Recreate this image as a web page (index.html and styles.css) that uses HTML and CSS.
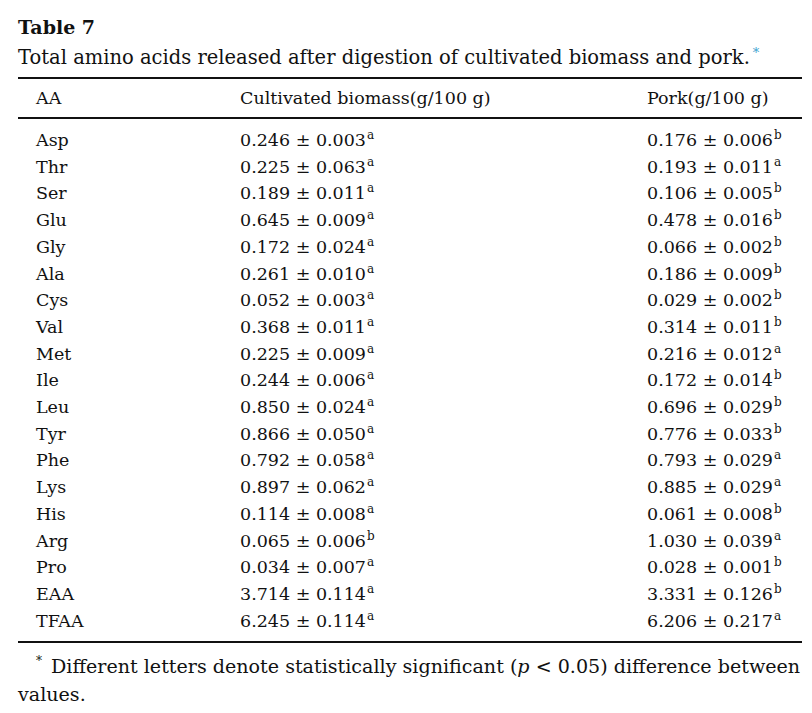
FILE: index.html
```html
<!DOCTYPE html>
<html>
<head>
<meta charset="utf-8">
<link rel="stylesheet" href="styles.css">
</head>
<body>
<div class="wrap">
  <h2 class="title">Table 7</h2>
  <p class="caption">Total amino acids released after digestion of cultivated biomass and pork.<sup class="ref">*</sup></p>
  <table class="tbl">
    <colgroup><col class="c1"><col class="c2"><col class="c3"></colgroup>
    <thead>
      <tr><th>AA</th><th>Cultivated biomass(g/100 g)</th><th>Pork(g/100 g)</th></tr>
    </thead>
    <tbody>
      <tr><td>Asp</td><td>0.246 ± 0.003<sup>a</sup></td><td>0.176 ± 0.006<sup>b</sup></td></tr>
      <tr><td>Thr</td><td>0.225 ± 0.063<sup>a</sup></td><td>0.193 ± 0.011<sup>a</sup></td></tr>
      <tr><td>Ser</td><td>0.189 ± 0.011<sup>a</sup></td><td>0.106 ± 0.005<sup>b</sup></td></tr>
      <tr><td>Glu</td><td>0.645 ± 0.009<sup>a</sup></td><td>0.478 ± 0.016<sup>b</sup></td></tr>
      <tr><td>Gly</td><td>0.172 ± 0.024<sup>a</sup></td><td>0.066 ± 0.002<sup>b</sup></td></tr>
      <tr><td>Ala</td><td>0.261 ± 0.010<sup>a</sup></td><td>0.186 ± 0.009<sup>b</sup></td></tr>
      <tr><td>Cys</td><td>0.052 ± 0.003<sup>a</sup></td><td>0.029 ± 0.002<sup>b</sup></td></tr>
      <tr><td>Val</td><td>0.368 ± 0.011<sup>a</sup></td><td>0.314 ± 0.011<sup>b</sup></td></tr>
      <tr><td>Met</td><td>0.225 ± 0.009<sup>a</sup></td><td>0.216 ± 0.012<sup>a</sup></td></tr>
      <tr><td>Ile</td><td>0.244 ± 0.006<sup>a</sup></td><td>0.172 ± 0.014<sup>b</sup></td></tr>
      <tr><td>Leu</td><td>0.850 ± 0.024<sup>a</sup></td><td>0.696 ± 0.029<sup>b</sup></td></tr>
      <tr><td>Tyr</td><td>0.866 ± 0.050<sup>a</sup></td><td>0.776 ± 0.033<sup>b</sup></td></tr>
      <tr><td>Phe</td><td>0.792 ± 0.058<sup>a</sup></td><td>0.793 ± 0.029<sup>a</sup></td></tr>
      <tr><td>Lys</td><td>0.897 ± 0.062<sup>a</sup></td><td>0.885 ± 0.029<sup>a</sup></td></tr>
      <tr><td>His</td><td>0.114 ± 0.008<sup>a</sup></td><td>0.061 ± 0.008<sup>b</sup></td></tr>
      <tr><td>Arg</td><td>0.065 ± 0.006<sup>b</sup></td><td>1.030 ± 0.039<sup>a</sup></td></tr>
      <tr><td>Pro</td><td>0.034 ± 0.007<sup>a</sup></td><td>0.028 ± 0.001<sup>b</sup></td></tr>
      <tr><td>EAA</td><td>3.714 ± 0.114<sup>a</sup></td><td>3.331 ± 0.126<sup>b</sup></td></tr>
      <tr><td>TFAA</td><td>6.245 ± 0.114<sup>a</sup></td><td>6.206 ± 0.217<sup>a</sup></td></tr>
    </tbody>
  </table>
  <p class="note"><sup class="star">*</sup>Different letters denote statistically significant (<i>p</i> &lt; 0.05) difference between values.</p>
</div>
</body>
</html>
```
FILE: styles.css
```css
html, body {
  margin: 0;
  padding: 0;
  background: #fff;
}
body {
  font-family: "DejaVu Serif", "Liberation Serif", serif;
  color: #111;
}
.wrap {
  padding: 0 8px 0 18px;
}
.title {
  margin: 0;
  padding-top: 15px;
  font-size: 19px;
  line-height: 24px;
  font-weight: bold;
}
.caption {
  margin: 0;
  padding-top: 5px;
  font-size: 19.5px;
  line-height: 28px;
  white-space: nowrap;
}
.ref {
  color: #3c9fd0;
  font-size: 13px;
  vertical-align: 0;
  position: relative;
  top: -7px;
  margin-left: 3px;
}
.tbl {
  margin-top: 3px;
  width: 784px;
  border-collapse: collapse;
  table-layout: fixed;
  font-size: 17.5px;
}
.c1 { width: 222px; }
.c2 { width: 407px; }
.c3 { width: 155px; }
.tbl thead tr {
  border-top: 2px solid #111;
  border-bottom: 2px solid #111;
}
.tbl th {
  font-weight: normal;
  text-align: left;
  height: 38px;
  padding: 0;
  vertical-align: middle;
  white-space: nowrap;
}
.tbl th:first-child,
.tbl td:first-child {
  padding-left: 18px;
}
.tbl td {
  padding: 0;
  line-height: 26.7px;
  height: 26.7px;
  white-space: nowrap;
}
.tbl tbody tr:first-child td {
  padding-top: 8px;
}
.tbl tbody tr:last-child td {
  padding-bottom: 7px;
}
.tbl tbody tr:last-child {
  border-bottom: 2px solid #111;
}
.tbl sup {
  font-size: 12px;
  line-height: 0;
  vertical-align: 0;
  position: relative;
  top: -7px;
  margin-left: 1px;
}
.note {
  margin: 0;
  padding-top: 10px;
  font-size: 19.1px;
  line-height: 28px;
  text-indent: 18px;
  margin-right: -6px;
}
.star {
  font-size: 12px;
  line-height: 0;
  vertical-align: 0;
  position: relative;
  top: -8px;
  margin-right: 9px;
}
```
